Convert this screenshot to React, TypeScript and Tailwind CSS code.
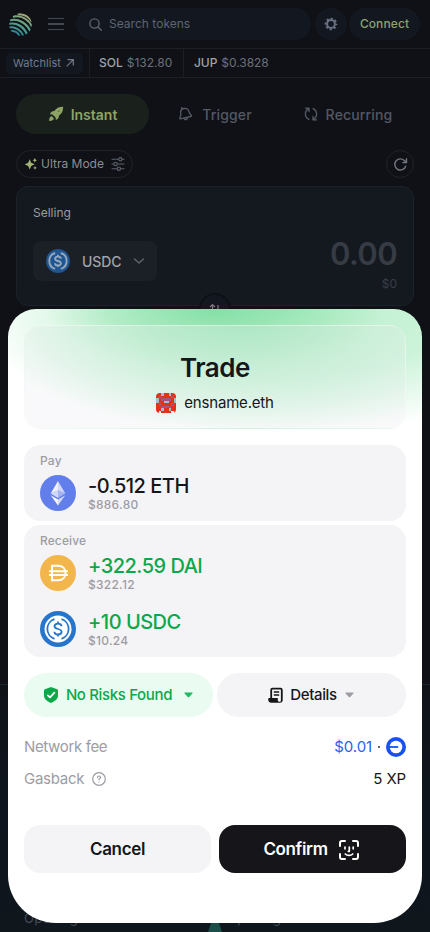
import React from 'react';

const JupiterLogo = () => (
  <svg className="block h-[23px] w-[23px]" viewBox="0 0 24 24" fill="none" stroke="url(#jup)" strokeWidth="2.2" strokeLinecap="butt">
    <defs>
      <linearGradient id="jup" gradientUnits="userSpaceOnUse" x1="17" y1="2" x2="8" y2="22">
        <stop stopColor="#a5a576" />
        <stop offset=".5" stopColor="#5ca28a" />
        <stop offset="1" stopColor="#2b8494" />
      </linearGradient>
      <clipPath id="planet"><circle cx="12" cy="12" r="11.800" /></clipPath>
    </defs>
    <g clipPath="url(#planet)">
      <path d="M9 1c6 0 11.500 2.500 15 8M4 3.800c8.500-1.500 16 2.500 20 10.200M1 7.500c9-2 17.500 3 21.500 12M0 11.300c8-1.700 16 3.200 19 11.700M0 15.200c6.500-1.300 12.700 2.500 15 8.800M1 19c4.500-.8 8.500 1.500 10 5" />
    </g>
  </svg>
);

const Rocket = () => (
  <svg className="block h-4 w-4" viewBox="0 0 16 16" fill="#8da365">
    <path d="M15.200.8C10.800.8 8.200 2.300 6.300 5.100c-1.900-.1-3.300.6-4.400 3.100l2.500.2 3.200 3.200.2 2.500c2.500-1.100 3.200-2.500 3.100-4.400 2.800-1.900 4.300-4.500 4.300-8.900Z" />
    <path d="M3.800 10.200c-1.700 0-2.700 1.500-2.700 4.700 3.200 0 4.700-1 4.700-2.700Z" />
    <circle cx="10.700" cy="5.300" r=".8" fill="#536340" />
  </svg>
);

const Bell = () => (
  <svg className="block h-4 w-4" viewBox="0 0 16 16" fill="none" stroke="#555a65" strokeWidth="1.3" strokeLinecap="round" strokeLinejoin="round">
    <path d="m2.200 12.800 10.700-2.300c.7-.2.8-.9.3-1.300-1-.8-1.700-1.800-2.200-3.500C10.300 3.200 8 2 5.700 2.500 3.500 3 2.300 5 2.700 7.500c.3 1.700.1 2.800-.7 4-.5.6-.5 1.400.2 1.300ZM6.300 12.500c.5 1.800 2.900 1.600 3-.5M3.600 1.700l.2 1.200" />
  </svg>
);

const Recurring = () => (
  <svg className="block h-[14px] w-[14px]" viewBox="0 0 16 16" fill="none" stroke="#555a65" strokeWidth="1.500" strokeLinecap="round" strokeLinejoin="round">
    <path d="M1.700 1.200h4v4M5.400 1.800C.3 4.500.3 11.500 5.600 14.200M14.300 14.800h-4v-4M10.600 14.200c5.100-2.700 5.100-9.700-.2-12.400" />
  </svg>
);

const Sparkles = () => (
  <svg className="block h-3 w-3" viewBox="0 0 12 12" fill="#a4b278">
    <path d="M4.700 1.200 6.200 4.700l3.500 1.600-3.500 1.600-1.500 3.500-1.500-3.500L-.3 6.300l3.500-1.600ZM9.800-.1l.7 1.700 1.500.7-1.500.7-.7 1.700-.7-1.700-1.500-.7 1.500-.7ZM10 8l.6 1.300 1.300.6-1.300.6-.6 1.300-.6-1.300-1.300-.6 1.300-.6Z" />
  </svg>
);

const Sliders = () => (
  <svg className="block h-[14px] w-[14px]" viewBox="0 0 14 14" fill="none" stroke="#5e626d" strokeWidth="1.1" strokeLinecap="round">
    <path d="M1 2.300h6.300M11.300 2.300H13M1 7h1.500M6.500 7H13M1 11.700h4.800M9.800 11.700H13" />
    <circle cx="9.300" cy="2.300" r="1.700" /><circle cx="4.500" cy="7" r="1.700" /><circle cx="7.800" cy="11.700" r="1.700" />
  </svg>
);

const Gear = () => (
  <svg className="block h-[14px] w-[14px]" viewBox="0 0 14 14" fill="none" stroke="#6b7383">
    <circle cx="7" cy="7" r="3.900" strokeWidth="2" />
    <circle cx="7" cy="7" r="5.500" strokeWidth="1.600" strokeDasharray="2.160 2.160" strokeDashoffset="1.080" />
  </svg>
);

const Usdc = ({ muted = false }: { muted?: boolean }) => (
  <svg className="block h-full w-full" viewBox="0 0 36 36" fill="none">
    <circle cx="18" cy="18" r="18" fill={muted ? '#1f5590' : '#2775ca'} />
    {!muted && <circle cx="18" cy="18" r="13.500" fill="#fff" />}
    <g stroke={muted ? '#98a8bc' : '#2775ca'} strokeWidth={muted ? 2.300 : 1.800} transform={muted ? 'translate(-4 -4) scale(1.220)' : undefined}>
      <path d="M14.500 8.200a10.300 10.300 0 0 0 0 19.600M21.500 8.200a10.300 10.300 0 0 1 0 19.600" />
      <path d="M21.500 15.300c0-1.700-1.400-2.700-3.500-2.700s-3.500.9-3.500 2.600c0 3.800 7.100 1.800 7.100 5.600 0 1.800-1.500 2.700-3.600 2.700s-3.600-1-3.600-2.800M18 10.500v2.200M18 23.300v2.200" />
    </g>
  </svg>
);

const Eth = () => (
  <svg className="block h-9 w-9" viewBox="0 0 36 36">
    <circle cx="18" cy="18" r="18" fill="#627eea" />
    <path d="M18 6v9.200l-7.300 3.300Z" fill="#fff" opacity=".9" />
    <path d="m18 6 7.300 12.500-7.300-3.300Z" fill="#fff" opacity=".7" />
    <path d="M18 15.200v7.700l-7.300-4.400Z" fill="#fff" opacity=".7" />
    <path d="m18 15.200 7.300 3.300-7.300 4.400Z" fill="#fff" opacity=".42" />
    <path d="M10.700 20.200 18 24.500v6Z" fill="#fff" opacity=".95" />
    <path d="M18 24.500l7.300-4.300L18 30.500Z" fill="#fff" opacity=".7" />
  </svg>
);

const Dai = () => (
  <svg className="block h-9 w-9" viewBox="0 0 36 36" fill="none">
    <circle cx="18" cy="18" r="18" fill="#f3b64c" />
    <path d="M12 10.800h6c4.600 0 7.500 2.900 7.500 7.300s-2.900 7.200-7.500 7.200h-6ZM9 16.300h19M9 20h19" stroke="#fff" strokeWidth="1.900" />
  </svg>
);

const palette: Record<string, string> = { r: '#de3417', p: '#a7537c', b: '#9cc4c8', w: '#eef0dc' };
const pixels = ['rrbrrbrr', 'rprrrrpr', 'brpppprb', 'brrbbrrb', 'rprrrrpr', 'rrpppprr', 'rrbrrbrr', 'rwrrrrwr'];

const Identicon = () => (
  <svg className="block h-5 w-5 rounded-[4px]" viewBox="0 0 8 8" shapeRendering="crispEdges">
    {pixels.flatMap((row, y) => row.split('').map((c, x) => <rect key={`${x}-${y}`} x={x} y={y} width="1" height="1" fill={palette[c]} />))}
  </svg>
);

const FaceId = () => (
  <svg className="block h-[22px] w-[22px]" viewBox="0 0 22 22" fill="none" stroke="#fff" strokeWidth="2" strokeLinecap="round" strokeLinejoin="round">
    <path d="M2 7V4a2 2 0 0 1 2-2h3M15 2h3a2 2 0 0 1 2 2v3M20 15v3a2 2 0 0 1-2 2h-3M7 20H4a2 2 0 0 1-2-2v-3" />
    <path d="M7 8v1.800M15.200 8v1.800M11.300 8v4.300h-1M7.300 15c2 1.900 5.400 1.900 7.400 0" strokeWidth="1.700" />
  </svg>
);

const Caret = ({ color }: { color: string }) => (
  <svg className="block h-[6px] w-[9px]" viewBox="0 0 9 6"><path d="M1 .5h7c.6 0 .8.6.4 1L5.200 5c-.4.4-1 .4-1.400 0L.6 1.500C.2 1.100.4.5 1 .5Z" fill={color} /></svg>
);

function TokenRow({ icon, amount, value, color }: { icon: React.ReactNode; amount: string; value: string; color: string }) {
  return (
    <div className="flex h-10 items-center gap-3">
      <div className="h-9 w-9 shrink-0">{icon}</div>
      <div className="h-10 pt-px">
        <div className={`text-[20px] leading-6 font-medium tracking-[-0.5px] ${color}`}>{amount}</div>
        <div className="text-[12px] leading-[14px] font-medium tracking-[0.25px] text-[#9c9ca4]">{value}</div>
      </div>
    </div>
  );
}

function Backdrop() {
  return (
    <div className="flex h-full flex-col">
      <header className="flex h-12 shrink-0 items-center">
        <div className="ml-[9px]"><JupiterLogo /></div>
        <div className="ml-4 flex w-4 flex-col gap-[4px]">
          <i className="h-[1.5px] bg-[#424852]" /><i className="h-[1.5px] bg-[#424852]" /><i className="h-[1.5px] bg-[#424852]" />
        </div>
        <div className="ml-3 flex h-8 w-[235px] items-center rounded-full bg-[#131820] pl-[13px]">
          <svg className="h-[13px] w-[13px]" viewBox="0 0 13 13" fill="none" stroke="#5c626e" strokeWidth="1.400" strokeLinecap="round"><circle cx="5.500" cy="5.500" r="4.600" /><path d="m9 9 3.300 3.300" /></svg>
          <span className="ml-[7px] text-[12px] tracking-[0.02px] text-[#5e6470]">Search tokens</span>
        </div>
        <div className="ml-1 flex h-8 w-8 items-center justify-center rounded-full bg-[#131820]"><Gear /></div>
        <div className="ml-[2px] flex h-8 w-[71px] items-center justify-center rounded-full bg-[#131820] text-[12px] font-medium tracking-[0.1px] text-[#8da36c]">Connect</div>
      </header>
      <div className="flex h-[30px] shrink-0 items-stretch border-y border-[#1b2028] text-[12px]">
        <div className="flex w-[90px] items-center border-r border-[#1b2028]">
          <div className="ml-[6px] flex h-[21px] w-[77px] items-center gap-[5px] rounded-[5px] bg-[#131820] pl-[7px] text-[11px] tracking-[0.05px] text-[#727a88]">
            Watchlist
            <svg className="h-2 w-2" viewBox="0 0 8 8" fill="none" stroke="#727a88" strokeWidth="1.200"><path d="M.7 7.300 7.300.7M1.500.7h5.800v5.800" /></svg>
          </div>
        </div>
        <div className="flex w-[94px] items-center gap-1 border-r border-[#1b2028] pl-[9px] text-[#6c707b]"><span className="font-medium text-[#a0a3a8]">SOL</span>$132.80</div>
        <div className="flex items-center gap-1 pl-[10px] tracking-[-0.05px] text-[#6c707b]"><span className="font-medium text-[#a0a3a8]">JUP</span>$0.3828</div>
      </div>
      <nav className="mt-4 flex h-10 shrink-0 px-4 text-[14px] font-medium tracking-[0.15px] text-[#535862]">
        <div className="flex w-[133px] items-center justify-center gap-[7px] rounded-full bg-[#1a201c] font-semibold tracking-[0px] text-[#8da365]"><Rocket />Instant</div>
        <div className="flex flex-1 items-center justify-center gap-2 pr-px"><Bell /><span>Trigger</span></div>
        <div className="flex w-[132px] items-center justify-center gap-2"><Recurring />Recurring</div>
      </nav>
      <div className="mt-4 flex h-7 shrink-0 items-center justify-between px-4">
        <div className="flex h-7 w-[117px] items-center rounded-full border border-[#1e232b] pl-2 text-[12px] text-[#8b8e94]">
          <Sparkles /><span className="ml-1 w-[62px] whitespace-nowrap">Ultra Mode</span><span className="ml-2"><Sliders /></span>
        </div>
        <div className="flex h-7 w-7 items-center justify-center rounded-full border border-[#1e232b]">
          <svg className="h-[15px] w-[15px]" viewBox="0 0 15 15" fill="none" stroke="#737780" strokeWidth="1.400" strokeLinecap="round" strokeLinejoin="round"><path d="M12.700 9.200A5.600 5.600 0 1 1 11.800 4l1.700 1.600M13.500 1.800v3.800H9.800" /></svg>
        </div>
      </div>
      <section className="relative mx-4 mt-2 h-[120px] shrink-0 rounded-xl border border-[#1c222b] bg-[#141920] px-4 pt-4">
        <div className="text-[12px] leading-[19px] text-[#9a9da2]">Selling</div>
        <div className="mt-[10px] flex justify-between">
          <div className="mt-[9px] flex h-10 w-[124px] items-center rounded-lg bg-[#1b1f26] pl-[13px]">
            <div className="h-6 w-6"><Usdc muted /></div>
            <span className="ml-3 text-[14px] font-medium tracking-[-0.1px] text-[#a0a3a6]">USDC</span>
            <svg className="ml-3 h-[10px] w-3" viewBox="0 0 12 10" fill="none" stroke="#5d626a" strokeWidth="1.600" strokeLinecap="round" strokeLinejoin="round"><path d="m1.500 3 4.500 4 4.500-4" /></svg>
          </div>
          <div className="mt-[3px] text-right"><div className="text-[31px] leading-[38px] font-semibold tracking-[-0.6px] text-[#363b44]">0.00</div><div className="mt-[3px] text-[12px] leading-4 text-[#383d46]">$0</div></div>
        </div>
        <div className="absolute -bottom-5 left-1/2 flex h-8 w-8 -translate-x-1/2 justify-center rounded-full border-2 border-[#0d1117] bg-[#131820] pt-[8px]">
          <svg className="h-3 w-3" viewBox="0 0 12 12" fill="none" stroke="#777b82" strokeWidth="1.200"><path d="M3.500 10V1.500M1 4l2.500-2.500L6 4M9 2v8" /></svg>
        </div>
      </section>
      <div className="mt-[378px] flex-1 border-t border-[#192630] bg-linear-to-b from-[#0f1318] via-[#0f151e] to-[#0f161c]">
        <div className="mt-[223px] flex h-[24px] items-start px-6 text-[13px] leading-5 tracking-[0.3px] text-[#454b54]">
          <span className="w-[203px]">Opening</span><span>Opening</span>
          <svg className="absolute bottom-0 left-[208px] h-[9px] w-[14px]" viewBox="0 0 14 9"><path d="M3 0h8l3 9H0Z" fill="#1b4d49" /></svg>
        </div>
      </div>
    </div>
  );
}

export default function App() {
  return (
    <main className="relative h-[932px] w-[430px] overflow-hidden bg-[#0f1117] font-['Inter',sans-serif]">
      <Backdrop />
      <section className="absolute top-[309px] left-2 flex h-[614px] w-[414px] flex-col overflow-hidden rounded-t-[28px] rounded-b-[48px] bg-white bg-[radial-gradient(ellipse_170px_60px_at_50%_0px,rgba(100,215,143,0.65),transparent_100%),radial-gradient(ellipse_310px_125px_at_66%_0px,rgba(144,229,173,0.62)_0%,rgba(144,229,173,0.46)_55%,transparent_100%)] px-4 pt-4 text-[#16161a]">
        <div className="flex h-[104px] shrink-0 flex-col items-center rounded-2xl border border-white/25 bg-[radial-gradient(ellipse_270px_108px_at_58%_0px,rgba(155,226,182,0.55),rgba(175,234,196,0.36)_50%,transparent_100%),linear-gradient(rgba(243,243,246,0.5),rgba(243,243,246,0.5))] pt-[27px]">
          <h1 className="text-[26px] leading-[30px] font-semibold tracking-[-0.5px]">Trade</h1>
          <div className="mt-[10px] flex items-center gap-2 text-[15px] leading-5 tracking-[-0.18px]"><Identicon />ensname.eth</div>
        </div>
        <div className="mt-4 h-[76px] shrink-0 rounded-2xl bg-[#f4f4f7] px-4 pt-2">
          <div className="mb-[4px] text-[12px] leading-4 font-medium tracking-[0.2px] text-[#9c9ca4]">Pay</div>
          <TokenRow icon={<Eth />} amount="-0.512 ETH" value="$886.80" color="text-[#16161a]" />
        </div>
        <div className="mt-1 h-[132px] shrink-0 rounded-2xl bg-[#f4f4f7] px-4 pt-2">
          <div className="mb-[4px] text-[12px] leading-4 font-medium tracking-[0.1px] text-[#9c9ca4]">Receive</div>
          <TokenRow icon={<Dai />} amount="+322.59 DAI" value="$322.12" color="text-[#0ba84a]" />
          <div className="mt-4"><TokenRow icon={<Usdc />} amount="+10 USDC" value="$10.24" color="text-[#0ba84a]" /></div>
        </div>
        <div className="mt-4 grid h-11 shrink-0 grid-cols-2 gap-1 text-[15px] font-medium tracking-[-0.35px]">
          <div className="flex items-center justify-center rounded-full bg-[#eafbf1] text-[#0ba84a]">
            <svg className="mr-2 h-4 w-[14px]" viewBox="0 0 14 16"><path d="M6.300.3.900 2.200C.3 2.400 0 2.800 0 3.400v5.200c0 3.100 2.700 5.500 6.300 7.200.5.200.9.200 1.400 0C11.300 14.100 14 11.700 14 8.600V3.400c0-.6-.3-1-.9-1.200L7.700.3c-.5-.2-.9-.2-1.400 0Z" fill="#0ba84a" /><path d="m3.800 8.300 2.200 2.100 4.400-4.800" fill="none" stroke="#fff" strokeWidth="1.700" strokeLinecap="round" strokeLinejoin="round" /></svg>
            No Risks Found<span className="ml-3"><Caret color="#23ba65" /></span>
          </div>
          <div className="flex items-center justify-center rounded-full bg-[#f4f4f7] pr-px">
            <svg className="mr-[7px] h-4 w-[15px]" viewBox="0 0 15 16" fill="none" stroke="#16161a"><path d="M3.200 11.500V2.900c0-.7.500-1.200 1.200-1.200h8.200c.7 0 1.200.5 1.200 1.200v10.400c0 .9-.5 1.500-1.300 1.500" strokeWidth="1.800" /><path d="M5.800 5h5.400M5.800 8h5.400" strokeWidth="1.400" /><path d="M.2 12.300c0-.8.500-1.300 1.300-1.300h8.300v2.500c0 .8.800 1.300 2.700 1.300v1H3.200c-2 0-3-1.200-3-3.500Z" fill="#16161a" stroke="none" /></svg>
            Details<span className="ml-2"><Caret color="#9c9ca4" /></span>
          </div>
        </div>
        <div className="mt-4 flex h-7 shrink-0 items-center justify-between text-[15px] tracking-[-0.1px]">
          <span className="tracking-[-0.35px] text-[#9c9ca4]">Network fee</span>
          <span className="flex items-center text-[#2962ef]">$0.01<i className="mx-[6px] h-[2px] w-[2px] rounded-full bg-[#333]" /><svg className="h-5 w-5" viewBox="0 0 20 20"><circle cx="10" cy="10" r="10" fill="#1652f0" /><circle cx="10" cy="10" r="6.300" fill="#fff" /><path d="M3 9.100h9.200v1.800H3Z" fill="#1652f0" /></svg></span>
        </div>
        <div className="mt-1 flex h-7 shrink-0 items-center justify-between text-[15px] tracking-[-0.25px]">
          <span className="flex items-center text-[#9c9ca4]">Gasback<svg className="ml-2 h-[14px] w-[14px]" viewBox="0 0 14 14" fill="none" stroke="#9c9ca4" strokeWidth="1.200" strokeLinecap="round"><circle cx="7" cy="7" r="6.300" /><path d="M5.500 5.500c0-1 .7-1.500 1.500-1.500s1.600.5 1.600 1.400c0 1.200-1.600 1.200-1.600 2.400M7 10v.1" /></svg></span><span className="tracking-[-0.1px]">5 XP</span>
        </div>
        <div className="mt-8 grid h-12 shrink-0 grid-cols-2 gap-2 text-[17px] font-semibold tracking-[-0.35px]">
          <button className="rounded-2xl bg-[#f4f4f7] pt-px">Cancel</button>
          <button className="flex items-center justify-center gap-[10px] rounded-2xl bg-[#16161a] pt-px pr-[2px] text-white">Confirm<FaceId /></button>
        </div>
      </section>
    </main>
  );
}
